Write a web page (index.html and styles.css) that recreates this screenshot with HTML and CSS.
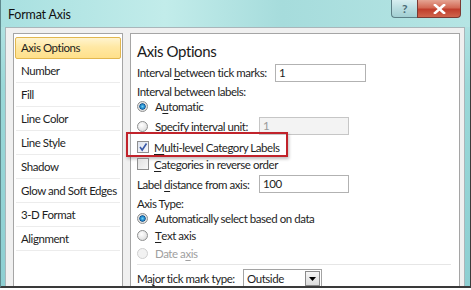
FILE: index.html
```html
<!DOCTYPE html>
<html lang="en">
<head>
  <meta charset="UTF-8">
  <title>Format Axis</title>
  <link rel="stylesheet" href="styles.css">
</head>
<body>
  <div class="window">
    <div class="titlebar">
      <span class="title">Format Axis</span>
      <div class="caption-buttons">
        <span class="cap help">?</span>
        <span class="cap close">
          <svg width="13" height="10" viewBox="0 0 13 10"><path d="M2 1 L11 9 M11 1 L2 9" stroke="#fff" stroke-width="2.6" stroke-linecap="square"/></svg>
        </span>
      </div>
    </div>
    <div class="client">
      <ul class="nav">
        <li class="active">Axis Options</li>
        <li>Number</li>
        <li>Fill</li>
        <li>Line Color</li>
        <li>Line Style</li>
        <li>Shadow</li>
        <li>Glow and Soft Edges</li>
        <li>3-D Format</li>
        <li>Alignment</li>
      </ul>
      <div class="pane">
        <div class="heading">Axis Options</div>
        <div class="row r-tick"><span class="label">Interval <u>b</u>etween tick marks:</span><span class="field f-tick">1</span></div>
        <div class="row r-labels">Interval between labels:</div>
        <div class="row r-auto"><span class="radio on"></span>A<u>u</u>tomatic</div>
        <div class="row r-spec"><span class="radio"></span><span class="label">S<u>p</u>ecify interval unit:</span><span class="field f-unit disabled">1</span></div>
        <div class="row r-multi">
          <span class="check on"><svg width="10" height="10" viewBox="0 0 10 10"><path d="M2 5 L4.2 8 L8.5 1.5" fill="none" stroke="#3a5aa8" stroke-width="1.6"/></svg></span><u>M</u>ulti-level Category Labels
          <span class="highlight"></span>
        </div>
        <div class="row r-cat"><span class="check"></span><u>C</u>ategories in reverse order</div>
        <div class="row r-dist"><span class="label">Label <u>d</u>istance from axis:</span><span class="field f-unit">100</span></div>
        <div class="row r-type">Axis Type:</div>
        <div class="row r-sel"><span class="radio on"></span>Automatically select based on data</div>
        <div class="row r-text"><span class="radio"></span><u>T</u>ext axis</div>
        <div class="row r-date disabled-text"><span class="radio dim"></span>Date a<u>x</u>is</div>
        <div class="sep"></div>
        <div class="row r-major"><span class="label">Ma<u>j</u>or tick mark type:</span><span class="select">Outside<span class="drop"><svg width="7" height="4" viewBox="0 0 7 4"><path d="M0 0 H7 L3.5 4 Z" fill="#000"/></svg></span></span></div>
      </div>
    </div>
  </div>
</body>
</html>
```
FILE: styles.css
```css
* {
  box-sizing: border-box;
  margin: 0;
  padding: 0;
}
body {
  background: #fff;
  font-family: Lato, "Open Sans", sans-serif;
  font-size: 11.5px;
  letter-spacing: -0.45px;
  color: #1e1e1e;
}
u {
  text-decoration-thickness: 1px;
  text-underline-offset: 2px;
}

.window {
  width: 471px;
  height: 288px;
  display: flex;
  flex-direction: column;
  background: linear-gradient(180deg, #b9e6e6 0%, #9ad8d8 30%, #8dcfd2 100%);
  border-left: 1px solid #5f8a8e;
  border-right: 1px solid #3c3c3c;
  border-bottom: 2px solid #3a3a3a;
  overflow: hidden;
}

.titlebar {
  height: 27px;
  flex: none;
  display: flex;
  justify-content: space-between;
  padding-left: 7px;
  background: linear-gradient(90deg, #a8e0e0 0%, #c2ecea 35%, #a6dcdc 60%, #b5e5e4 100%);
}
.title {
  line-height: 30px;
  font-size: 12.5px;
  letter-spacing: -0.2px;
  color: #111;
}
.caption-buttons {
  display: flex;
  height: 18px;
  margin-right: 9px;
}
.cap {
  display: flex;
  align-items: center;
  justify-content: center;
  height: 18px;
  border: 1px solid #5c7f86;
  border-top: none;
}
.help {
  width: 26px;
  border-right: none;
  border-radius: 0 0 0 4px;
  background: linear-gradient(180deg, #d7eef0 0%, #b9dde0 50%, #a2cfd3 100%);
  color: #4b6a75;
  font-weight: bold;
  font-size: 12px;
}
.close {
  width: 44px;
  border-radius: 0 0 4px 0;
  background: linear-gradient(180deg, #e5a493 0%, #d36a55 45%, #c03e2c 55%, #d0654d 100%);
  border-color: #7b3a33;
}

.client {
  flex: 1;
  display: flex;
  gap: 7px;
  margin: 0 5px 0 4px;
  padding: 5px 4px 0 7px;
  background: #f0f0f0;
  border: 1px solid #a9b6ba;
  border-bottom: none;
}

.nav {
  width: 110px;
  list-style: none;
  background: #fff;
  border: 1px solid #a5a5a5;
  border-bottom: none;
}
.nav li {
  height: 24px;
  line-height: 23px;
  margin: 0 2px;
  padding-left: 5px;
  border-bottom: 1px solid #ececec;
  white-space: nowrap;
}
.nav li.active {
  height: 22px;
  line-height: 20px;
  margin: 3px 1px 0;
  padding-left: 5px;
  border: 1px solid #e2b74f;
  border-radius: 2px;
  background: linear-gradient(180deg, #fff4cf 0%, #ffe8a4 45%, #ffe08a 100%);
}

.pane {
  flex: 1;
  background: #fff;
  border: 1px solid #a5a5a5;
  border-bottom: none;
  padding-left: 6px;
  padding-right: 6px;
}
.heading {
  height: 29px;
  line-height: 34px;
  font-size: 15px;
  letter-spacing: -0.4px;
  color: #1a1a1a;
}
.row {
  display: flex;
  align-items: center;
  white-space: nowrap;
  position: relative;
}
.r-tick { height: 19px; }
.r-labels { height: 18px; }
.r-auto { height: 13px; }
.r-spec { height: 26px; }
.r-multi { height: 16px; }
.r-cat { height: 18px; }
.r-dist { height: 22px; }
.r-type { height: 17px; }
.r-sel { height: 13px; }
.r-text { height: 20px; }
.r-date { height: 16px; }
.r-major { height: 19px; }

.sep {
  height: 8px;
  background: linear-gradient(#fff 3px, #e6e6e6 3px, #e6e6e6 4px, #fff 4px);
  margin-right: 2px;
}

.label {
  display: inline-block;
}
.r-tick .label { width: 138px; }
.r-spec .label { width: 104px; }
.r-dist .label { width: 122px; }
.r-major .label { width: 106px; }

.field {
  height: 18px;
  line-height: 16px;
  border: 1px solid #b2b2b2;
  padding-left: 3px;
  background: #fff;
}
.f-tick { width: 91px; }
.f-unit { width: 90px; }
.field.disabled {
  background: #f3f3f3;
  border-color: #c6c6c6;
  color: #9a9a9a;
}

.radio {
  width: 11px;
  height: 11px;
  margin: 0 7px 0 0;
  border-radius: 50%;
  border: 1px solid #8e8f8f;
  background: radial-gradient(circle at 40% 35%, #fff 0%, #e6e6e6 60%, #cfcfcf 100%);
  flex: none;
}
.radio.on {
  background: radial-gradient(circle, #6fd1f7 0%, #1c7fc2 35%, #0d4f8a 45%, #dcdcdc 55%, #f4f4f4 100%);
}
.radio.dim {
  border-color: #d0d0d0;
  background: #f2f2f2;
}
.disabled-text {
  color: #a0a0a0;
}

.check {
  width: 12px;
  height: 12px;
  margin-right: 5px;
  border: 1px solid #8f8f8f;
  background: linear-gradient(135deg, #e0e0e0, #f8f8f8);
  display: flex;
  align-items: center;
  justify-content: center;
  flex: none;
}
.check.on {
  background: linear-gradient(135deg, #dde3ee, #f7f9fc);
}

.highlight {
  position: absolute;
  left: -11px;
  top: -7px;
  width: 162px;
  height: 25px;
  border: 2px solid #c1232b;
  box-shadow: 1px 2px 3px rgba(0, 0, 0, 0.25);
}

.select {
  display: flex;
  align-items: center;
  justify-content: space-between;
  width: 79px;
  height: 19px;
  padding-left: 3px;
  border: 1px solid #a3a3a3;
}
.drop {
  width: 15px;
  height: 15px;
  margin-right: 1px;
  border: 1px solid #8b8b8b;
  background: linear-gradient(#f6f6f6, #dcdcdc);
  display: flex;
  align-items: center;
  justify-content: center;
}
```
